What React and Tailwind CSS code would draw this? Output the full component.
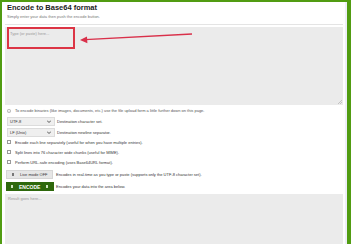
export default function App() {
  const font = { fontFamily: '"Liberation Sans", Arial, sans-serif' };
  const Check = ({ children }) => (
    <div className="h-[10px] flex items-center">
      <div className="ml-[2px] w-[4px] h-[4px] border-[0.5px] border-[#9a9a9a] bg-white" />
      <span className="ml-[4px] text-[4px] leading-[5px] text-[#333] whitespace-nowrap">{children}</span>
    </div>
  );
  const Select = ({ value, label }) => (
    <div className="h-[9px] flex items-center">
      <div className="ml-[2px] w-[48px] h-[9px] bg-[#efefef] border-[0.5px] border-[#dcdcdc] flex items-center justify-between pl-[2px] pr-[3px]">
        <span className="text-[4px] leading-[5px] text-[#333]">{value}</span>
        <svg width="4" height="3" viewBox="0 0 4 3"><path d="M0 0.5 L2 2.5 L4 0.5" fill="none" stroke="#444" strokeWidth="0.9" /></svg>
      </div>
      <span className="ml-[2px] text-[4px] leading-[5px] text-[#333] whitespace-nowrap">{label}</span>
    </div>
  );
  return (
    <div className="w-[351px] h-[244px] overflow-hidden bg-[#519c12] pt-[2px] pl-[2px] pr-[4px] flex" style={font}>
      <div className="flex-1 min-w-0 bg-white border-r-2 border-[#eeeef8] flex flex-col pl-[3px] pr-[2px]">
        <div className="h-[23px] shrink-0 border-b border-[#e4e4e4] pl-[2px] pt-[1px]">
          <div className="text-[7.5px] leading-[10px] font-bold text-[#222] whitespace-nowrap">Encode to Base64 format</div>
          <div className="text-[4px] leading-[5px] text-[#777] mt-[1px] whitespace-nowrap">Simply enter your data then push the encode button.</div>
        </div>
        <div className="relative h-[78px] shrink-0 mt-[2px] bg-[#ebebeb]">
          <div className="absolute left-[2px] top-0 w-[68px] h-[22px] border-2 border-[#dc3545]" />
          <div className="absolute left-[5px] top-[4px] text-[4px] leading-[5px] text-[#999] whitespace-nowrap">Type (or paste) here...</div>
          <svg className="absolute left-0 top-0" width="200" height="20" viewBox="0 0 200 20">
            <line x1="80" y1="12.6" x2="187" y2="7" stroke="#d9304a" strokeWidth="1.4" />
            <path d="M75 13 L82 9.5 L82.4 16.2 Z" fill="#d9304a" />
          </svg>
          <svg className="absolute right-[1px] bottom-[1px]" width="4" height="4" viewBox="0 0 4 4">
            <path d="M4 0 L0 4 M4 2 L2 4" stroke="#999" strokeWidth="0.5" />
          </svg>
        </div>
        <div className="mt-[3px] h-[5px] flex items-center shrink-0">
          <svg className="ml-[2px]" width="4" height="4" viewBox="0 0 4 4">
            <circle cx="2" cy="2" r="1.7" fill="none" stroke="#888" strokeWidth="0.5" />
            <path d="M2 1.6 V3" stroke="#888" strokeWidth="0.5" />
          </svg>
          <span className="ml-[4px] text-[4px] leading-[5px] text-[#555] whitespace-nowrap">To encode binaries (like images, documents, etc.) use the file upload form a little further down on this page.</span>
        </div>
        <div className="mt-[4px] shrink-0">
          <Select value="UTF-8" label="Destination character set." />
        </div>
        <div className="mt-[2px] shrink-0">
          <Select value="LF (Unix)" label="Destination newline separator." />
        </div>
        <div className="shrink-0">
          <Check>Encode each line separately (useful for when you have multiple entries).</Check>
          <Check>Split lines into 76 character wide chunks (useful for MIME).</Check>
          <Check>Perform URL-safe encoding (uses Base64URL format).</Check>
        </div>
        <div className="mt-[3px] h-[9px] flex items-center shrink-0">
          <div className="ml-[1px] w-[47px] h-[9px] bg-[#e6e6e6] border-[0.5px] border-[#d6d6d6] flex items-center">
            <div className="ml-[5px] w-[2px] h-[3px] border-x-[0.6px] border-[#777]" />
            <span className="ml-[6px] text-[4px] leading-[5px] text-[#333] whitespace-nowrap">Live mode OFF</span>
          </div>
          <span className="ml-[3px] text-[4px] leading-[5px] text-[#333] whitespace-nowrap">Encodes in real-time as you type or paste (supports only the UTF-8 character set).</span>
        </div>
        <div className="mt-[3px] h-[9px] flex items-center shrink-0">
          <div className="ml-[1px] w-[48px] h-[9px] bg-[#2e680c] flex items-center">
            <div className="ml-[5px] w-[2px] h-[3px] border-[0.6px] border-[#cfe3c0]" />
            <span className="ml-[6px] text-[5px] leading-[6px] font-bold text-white whitespace-nowrap">ENCODE</span>
            <div className="ml-[6px] w-[2px] h-[3px] border-[0.6px] border-[#cfe3c0]" />
          </div>
          <span className="ml-[2px] text-[4px] leading-[5px] text-[#333] whitespace-nowrap">Encodes your data into the area below.</span>
        </div>
        <div className="relative flex-1 mt-[3px] bg-[#ebebeb]">
          <div className="absolute left-[3px] top-[2px] text-[4px] leading-[5px] text-[#999] whitespace-nowrap">Result goes here...</div>
        </div>
      </div>
    </div>
  );
}
